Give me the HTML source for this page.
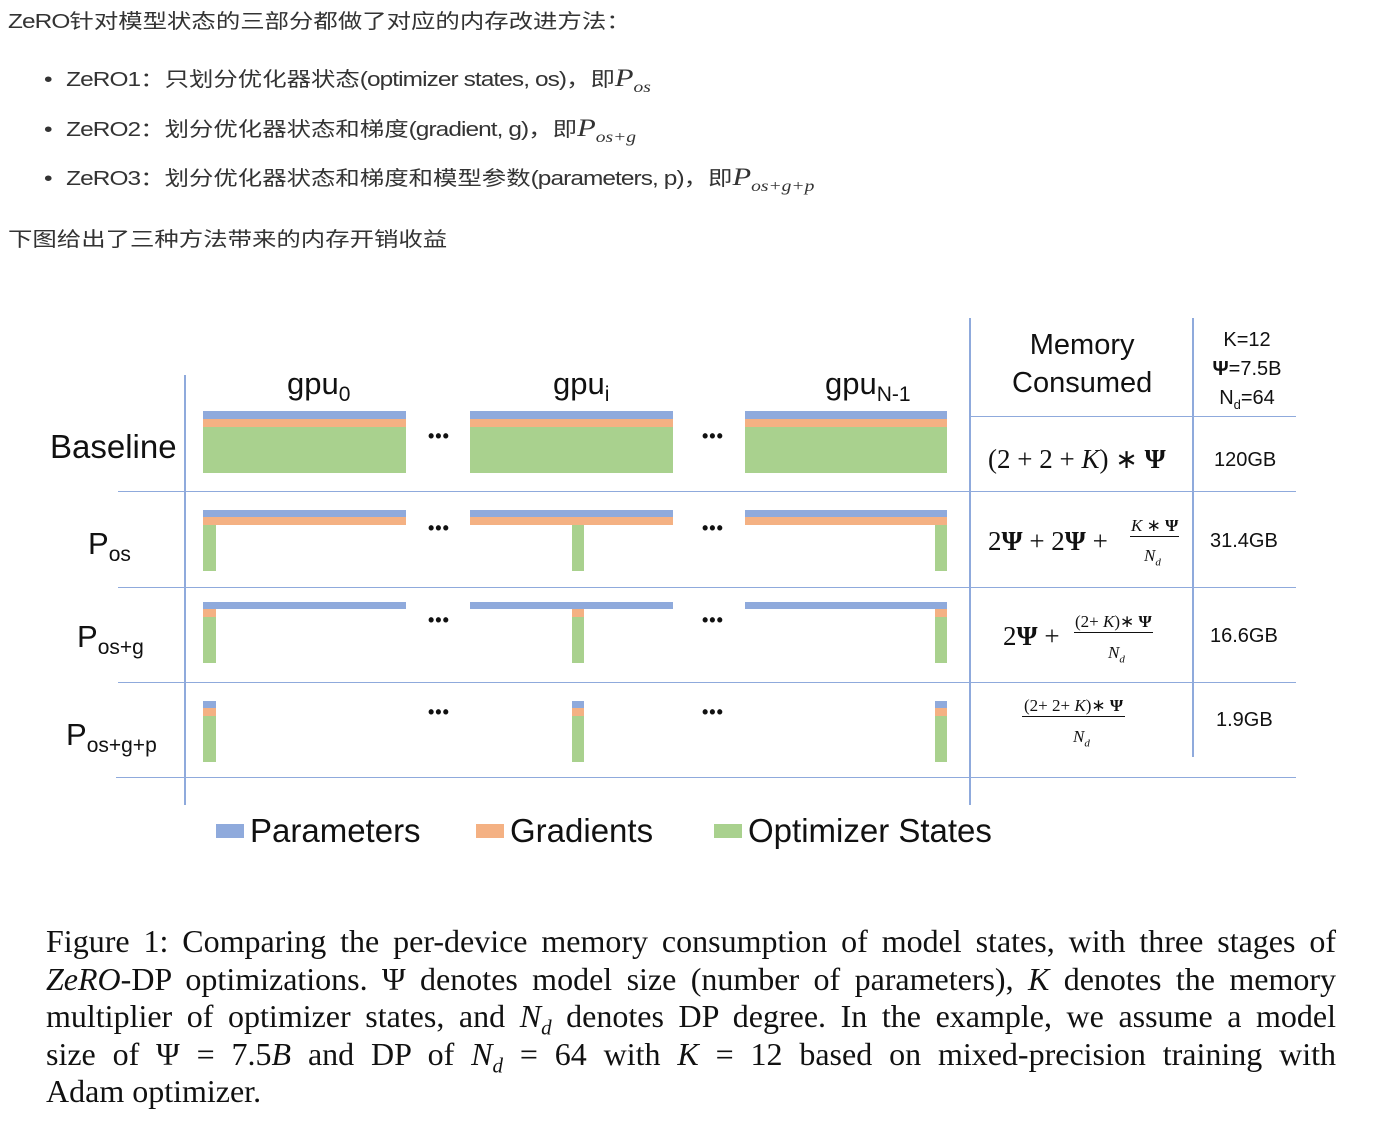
<!DOCTYPE html>
<html><head><meta charset="utf-8"><style>
body{margin:0;width:1384px;height:1142px;background:#fff;position:relative;overflow:hidden;font-family:"Liberation Sans","Noto Sans CJK SC",sans-serif;color:#333}
.t{position:absolute;font-size:20px;white-space:nowrap;transform:scaleX(1.22);transform-origin:left center;line-height:24px}
.t .l{letter-spacing:-0.75px}
.m{font-family:"Liberation Serif",serif;font-style:italic;font-size:25px}
.m sub{font-size:16px;line-height:0}
.a{position:absolute}
.hl{position:absolute;height:1px;background:#8faadc}
.vl{position:absolute;width:2px;background:#8faadc}
.b{position:absolute;background:#8faadc}.o{position:absolute;background:#f4b183}.g{position:absolute;background:#a9d18e}
.d{position:absolute;font-size:18px;font-weight:bold;color:#111;letter-spacing:1px}
.lab{position:absolute;color:#111;font-size:30px;white-space:nowrap}
.f{position:absolute;color:#111;font-family:"Liberation Serif",serif;white-space:nowrap}
.cl{position:absolute;left:46px;width:1290px;font-family:"Liberation Serif",serif;font-size:32px;line-height:36px;height:36px;color:#111;text-align:justify;text-align-last:justify;white-space:nowrap;overflow:visible}
.cl i{font-style:italic}
.cl sub{line-height:0;font-size:21px}
</style></head><body>
<div class="t" style="left:8px;top:10px"><span class="l">ZeRO</span>针对模型状态的三部分都做了对应的内存改进方法：</div>
<div class="t" style="left:44px;top:67px">•&nbsp; <span class="l">ZeRO1</span>：只划分优化器状态<span class="l">(optimizer states, os)</span>，即<span class="m">P<sub>os</sub></span></div>
<div class="t" style="left:44px;top:117px">•&nbsp; <span class="l">ZeRO2</span>：划分优化器状态和梯度<span class="l">(gradient, g)</span>，即<span class="m">P<sub>os+g</sub></span></div>
<div class="t" style="left:44px;top:166px">•&nbsp; <span class="l">ZeRO3</span>：划分优化器状态和梯度和模型参数<span class="l">(parameters, p)</span>，即<span class="m">P<sub>os+g+p</sub></span></div>
<div class="t" style="left:8px;top:228px">下图给出了三种方法带来的内存开销收益</div>

<div class="vl" style="left:184px;top:375px;height:430px"></div>
<div class="vl" style="left:969px;top:318px;height:487px"></div>
<div class="vl" style="left:1192px;top:318px;height:439px"></div>
<div class="hl" style="left:970px;top:416px;width:326px"></div>
<div class="hl" style="left:118px;top:491px;width:1178px"></div>
<div class="hl" style="left:118px;top:587px;width:1178px"></div>
<div class="hl" style="left:118px;top:682px;width:1178px"></div>
<div class="hl" style="left:116px;top:777px;width:1180px"></div>

<div class="lab" style="left:287px;top:366px;font-size:31px">gpu<sub style="font-size:21px">0</sub></div>
<div class="lab" style="left:553px;top:366px;font-size:31px">gpu<sub style="font-size:21px">i</sub></div>
<div class="lab" style="left:825px;top:366px;font-size:31px">gpu<sub style="font-size:21px">N-1</sub></div>
<div class="lab" style="left:1012px;top:326px;font-size:29px;text-align:center;line-height:38px">Memory<br>Consumed</div>
<div class="a" style="left:1208px;top:326px;font-size:20px;color:#111;line-height:29px;text-align:center;width:78px">K=12<br><b>Ψ</b>=7.5B<br>N<sub style="font-size:13px">d</sub>=64</div>

<div class="lab" style="left:50px;top:428px;font-size:33px">Baseline</div>
<div class="lab" style="left:88px;top:526px;font-size:31px">P<sub style="font-size:21px">os</sub></div>
<div class="lab" style="left:77px;top:619px;font-size:31px">P<sub style="font-size:21px">os+g</sub></div>
<div class="lab" style="left:66px;top:717px;font-size:31px">P<sub style="font-size:21px">os+g+p</sub></div>

<div class="b" style="left:203px;top:411px;width:203px;height:8px"></div><div class="o" style="left:203px;top:419px;width:203px;height:8px"></div><div class="g" style="left:203px;top:427px;width:203px;height:46px"></div>
<div class="b" style="left:470px;top:411px;width:203px;height:8px"></div><div class="o" style="left:470px;top:419px;width:203px;height:8px"></div><div class="g" style="left:470px;top:427px;width:203px;height:46px"></div>
<div class="b" style="left:745px;top:411px;width:202px;height:8px"></div><div class="o" style="left:745px;top:419px;width:202px;height:8px"></div><div class="g" style="left:745px;top:427px;width:202px;height:46px"></div>
<div class="b" style="left:203px;top:510px;width:203px;height:7px"></div><div class="o" style="left:203px;top:517px;width:203px;height:8px"></div><div class="g" style="left:203px;top:525px;width:13px;height:46px"></div>
<div class="b" style="left:470px;top:510px;width:203px;height:7px"></div><div class="o" style="left:470px;top:517px;width:203px;height:8px"></div><div class="g" style="left:572px;top:525px;width:12px;height:46px"></div>
<div class="b" style="left:745px;top:510px;width:202px;height:7px"></div><div class="o" style="left:745px;top:517px;width:202px;height:8px"></div><div class="g" style="left:935px;top:525px;width:12px;height:46px"></div>
<div class="b" style="left:203px;top:602px;width:203px;height:7px"></div><div class="o" style="left:203px;top:609px;width:13px;height:8px"></div><div class="g" style="left:203px;top:617px;width:13px;height:46px"></div>
<div class="b" style="left:470px;top:602px;width:203px;height:7px"></div><div class="o" style="left:572px;top:609px;width:12px;height:8px"></div><div class="g" style="left:572px;top:617px;width:12px;height:46px"></div>
<div class="b" style="left:745px;top:602px;width:202px;height:7px"></div><div class="o" style="left:935px;top:609px;width:12px;height:8px"></div><div class="g" style="left:935px;top:617px;width:12px;height:46px"></div>
<div class="b" style="left:203px;top:701px;width:13px;height:7px"></div><div class="o" style="left:203px;top:708px;width:13px;height:8px"></div><div class="g" style="left:203px;top:716px;width:13px;height:46px"></div>
<div class="b" style="left:572px;top:701px;width:12px;height:7px"></div><div class="o" style="left:572px;top:708px;width:12px;height:8px"></div><div class="g" style="left:572px;top:716px;width:12px;height:46px"></div>
<div class="b" style="left:935px;top:701px;width:12px;height:7px"></div><div class="o" style="left:935px;top:708px;width:12px;height:8px"></div><div class="g" style="left:935px;top:716px;width:12px;height:46px"></div>

<div class="d" style="left:428px;top:426px">•••</div><div class="d" style="left:702px;top:426px">•••</div>
<div class="d" style="left:428px;top:518px">•••</div><div class="d" style="left:702px;top:518px">•••</div>
<div class="d" style="left:428px;top:610px">•••</div><div class="d" style="left:702px;top:610px">•••</div>
<div class="d" style="left:428px;top:702px">•••</div><div class="d" style="left:702px;top:702px">•••</div>

<div class="f" style="left:988px;top:444px;font-size:27px">(2 + 2 + <i>K</i>) ∗ <b>Ψ</b></div>
<div class="a" style="left:1214px;top:449px;font-size:20px;color:#111">120GB</div>
<div class="f" style="left:988px;top:526px;font-size:27px">2<b>Ψ</b> + 2<b>Ψ</b> +</div>
<div class="f" style="left:1130px;top:516px;font-size:17px;border-bottom:1.5px solid #111;padding:0 1px"><i>K</i> ∗ <b>Ψ</b></div>
<div class="f" style="left:1144px;top:546px;font-size:17px"><i>N<sub style="font-size:11px">d</sub></i></div>
<div class="a" style="left:1210px;top:530px;font-size:20px;color:#111">31.4GB</div>
<div class="f" style="left:1003px;top:621px;font-size:27px">2<b>Ψ</b> +</div>
<div class="f" style="left:1074px;top:612px;font-size:17px;border-bottom:1.5px solid #111;padding:0 1px">(2+ <i>K</i>)∗ <b>Ψ</b></div>
<div class="f" style="left:1108px;top:643px;font-size:17px"><i>N<sub style="font-size:11px">d</sub></i></div>
<div class="a" style="left:1210px;top:625px;font-size:20px;color:#111">16.6GB</div>
<div class="f" style="left:1022px;top:696px;font-size:17px;border-bottom:1.5px solid #111;padding:0 2px">(2+ 2+ <i>K</i>)∗ <b>Ψ</b></div>
<div class="f" style="left:1073px;top:727px;font-size:17px"><i>N<sub style="font-size:11px">d</sub></i></div>
<div class="a" style="left:1216px;top:709px;font-size:20px;color:#111">1.9GB</div>

<div class="b" style="left:216px;top:824px;width:28px;height:14px"></div>
<div class="lab" style="left:250px;top:812px;font-size:33px">Parameters</div>
<div class="o" style="left:476px;top:824px;width:28px;height:14px"></div>
<div class="lab" style="left:510px;top:812px;font-size:33px">Gradients</div>
<div class="g" style="left:714px;top:824px;width:28px;height:14px"></div>
<div class="lab" style="left:748px;top:812px;font-size:33px">Optimizer States</div>

<div class="cl" style="top:923px">Figure 1: Comparing the per-device memory consumption of model states, with three stages of</div>
<div class="cl" style="top:961px"><i>ZeRO</i>-DP optimizations. Ψ denotes model size (number of parameters), <i>K</i> denotes the memory</div>
<div class="cl" style="top:998px">multiplier of optimizer states, and <i>N<sub>d</sub></i> denotes DP degree. In the example, we assume a model</div>
<div class="cl" style="top:1036px">size of Ψ = 7.5<i>B</i> and DP of <i>N<sub>d</sub></i> = 64 with <i>K</i> = 12 based on mixed-precision training with</div>
<div class="cl" style="top:1073px;text-align:left;text-align-last:left">Adam optimizer.</div>
</body></html>
